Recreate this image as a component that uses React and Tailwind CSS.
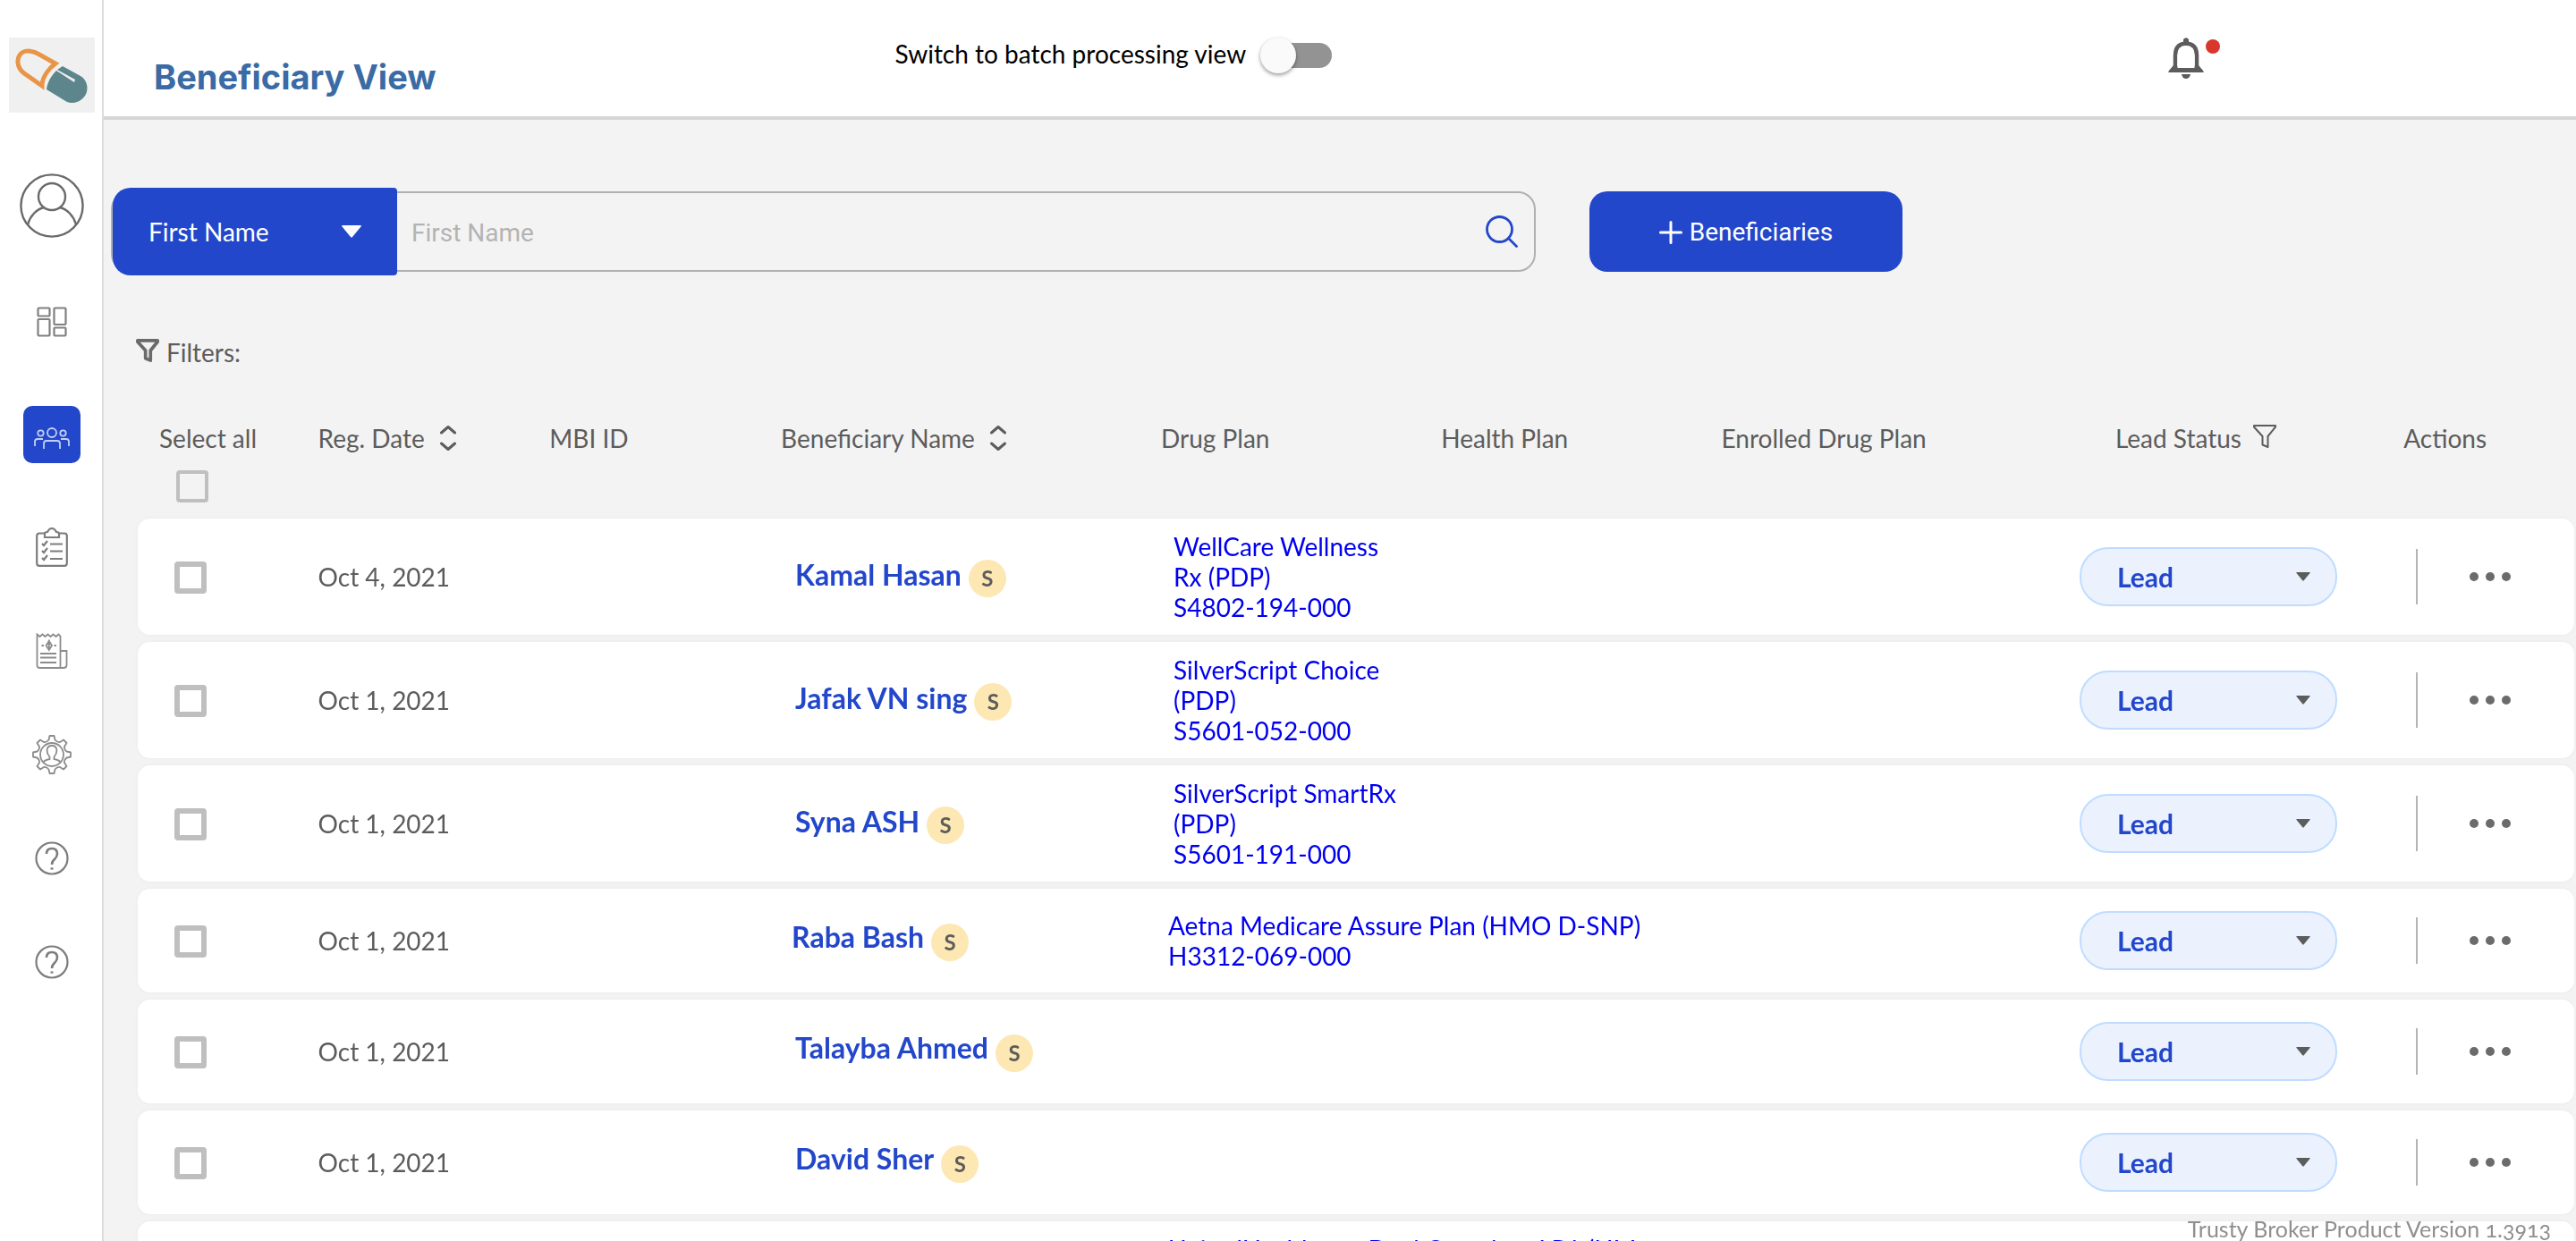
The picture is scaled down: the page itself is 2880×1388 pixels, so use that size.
import React from "react";

const rows = [
  { date: "Oct 4, 2021", name: "Kamal Hasan", plan: "WellCare Wellness Rx (PDP)", code: "S4802-194-000", tall: true },
  { date: "Oct 1, 2021", name: "Jafak VN sing", plan: "SilverScript Choice (PDP)", code: "S5601-052-000", tall: true },
  { date: "Oct 1, 2021", name: "Syna ASH", plan: "SilverScript SmartRx (PDP)", code: "S5601-191-000", tall: true },
  { date: "Oct 1, 2021", name: "Raba Bash", plan: "Aetna Medicare Assure Plan (HMO D-SNP)", code: "H3312-069-000", wide: true },
  { date: "Oct 1, 2021", name: "Talayba Ahmed" },
  { date: "Oct 1, 2021", name: "David Sher" },
  { date: "Oct 1, 2021", name: "Maria Cole", plan: "UnitedHealthcare Dual Complete LP1 (HM\nD-SNP)", code: "H5322-025-000", wide: true, tall: true },
];

function Logo() {
  return (
    <svg viewBox="0 0 96 84" className="h-[84px] w-24 bg-[#f0f0f0]" aria-label="Home">
      <path d="M37 54 L17 40 C4 30 10 12 25 15.500 C29 16 31 17 33 18.500 L52 29 C44 35 38 44 37 52 Z" fill="none" stroke="#e99547" strokeWidth="5" />
      <path d="M53 37 C47 43 43 50 42 58 L64 71.500 C74 76 84 70 87 61 C89 52 85 46 80 43 L60 32 L54 36 L74 47 L73 50 Z" fill="#5c868c" />
    </svg>
  );
}

function Avatar() {
  return (
    <svg viewBox="0 0 72 72" className="size-[72px]" fill="none" stroke="#6a6a6a" strokeWidth="2.400">
      <circle cx="36" cy="36" r="34.600" />
      <circle cx="36" cy="26" r="15" />
      <path d="M9 57 C12 47 19 40 27 38 M45 38 C53 40 60 47 63 57" />
    </svg>
  );
}

function DashboardIcon() {
  return (
    <svg viewBox="0 0 34 34" className="size-[34px]" fill="none" stroke="#808080" strokeWidth="2.200">
      <rect x="1.500" y="1.500" width="13" height="9" rx="1" />
      <rect x="1.500" y="14" width="13" height="18.500" rx="1" />
      <rect x="19.500" y="1.500" width="13" height="18.500" rx="1" />
      <rect x="19.500" y="23.500" width="13" height="9" rx="1" />
    </svg>
  );
}

function PeopleIcon() {
  return (
    <svg viewBox="0 0 40 26" className="h-[26px] w-10" fill="none" stroke="#c3cff5" strokeWidth="1.800">
      <circle cx="20" cy="7" r="5" />
      <circle cx="7.500" cy="7.500" r="3.200" />
      <circle cx="32.500" cy="7.500" r="3.200" />
      <path d="M11 25 V19 Q11 16 14 16 H26 Q29 16 29 19 V25" />
      <path d="M1 22 V17 Q1 14 4 14 H10 M30 14 H36 Q39 14 39 17 V22" />
    </svg>
  );
}

function ClipboardIcon() {
  return (
    <svg viewBox="0 0 36 44" className="h-11 w-9" fill="none" stroke="#7d7d7d" strokeWidth="2.200">
      <path d="M10 6.500 H4 Q1.200 6.500 1.200 9.500 V40 Q1.200 42.800 4 42.800 H32 Q34.800 42.800 34.800 40 V9.500 Q34.800 6.500 32 6.500 H26" />
      <path d="M10 11 V7 Q10 5 13 5 Q15 1 18 1 Q21 1 23 5 Q26 5 26 7 V11 Z" />
      <path d="M7 18 l2 2 l4-5 M7 26 l2 2 l4-5 M7 34 l2 2 l4-5 M16 18.500 H30 M16 26.500 H30 M16 35 H30" />
    </svg>
  );
}

function ReceiptIcon() {
  return (
    <svg viewBox="0 0 36 40" className="h-10 w-9" fill="none" stroke="#8c8c8c" strokeWidth="1.800">
      <path d="M1.500 1.500 l3 2.500 l3-2.500 l3 2.500 l3-2.500 l3 2.500 l3-2.500 l3 2.500 l3-2.500 l2 2 V39 H4 Q1.500 39 1.500 36 Z" />
      <path d="M28 20 H34.500 V36 Q34.500 39 31 39 H27" />
      <path d="M14.800 9 L18 14 L14.800 19 L11.600 14 Z M14.800 7.500 V20 M6.500 14 H9 M20.500 14 H23" />
      <path d="M5 23 H23 M5 27.500 H23 M5 33 H23" />
    </svg>
  );
}

function GearUserIcon() {
  return (
    <svg viewBox="0 0 44 44" className="size-11" fill="none" stroke="#8c8c8c" strokeWidth="1.800">
      <path d="M18.500 5.500 L19.500 1 H24.500 L25.500 5.500 Q28 8.500 31 8 L35 5.500 L38.500 9 L36 13 Q35.500 16 38.500 18.500 L43 19.500 V24.500 L38.500 25.500 Q35.500 28 36 31 L38.500 35 L35 38.500 L31 36 Q28 35.500 25.500 38.500 L24.500 43 H19.500 L18.500 38.500 Q16 35.500 13 36 L9 38.500 L5.500 35 L8 31 Q8.500 28 5.500 25.500 L1 24.500 V19.500 L5.500 18.500 Q8.500 16 8 13 L5.500 9 L9 5.500 L13 8 Q16 8.500 18.500 5.500 Z" strokeLinejoin="round" />
      <circle cx="22" cy="22" r="13" />
      <path d="M12.500 30.500 Q14 28 19.500 27 V24.500 Q16.500 21 16.500 17 Q17 12 22 12 Q27 12 27.500 17 Q27.500 21 24.500 24.500 V27 Q30 28 31.500 30.500" />
    </svg>
  );
}

function HelpIcon() {
  return (
    <svg viewBox="0 0 38 38" className="size-[38px]" fill="none" stroke="#7d7d7d" strokeWidth="2.200">
      <circle cx="19" cy="19" r="17.500" />
      <path d="M13 14 Q13 8 19 8 Q25 8 25 14 Q25 17 22 20 Q19 22.500 19 26" strokeWidth="2.600" />
      <path d="M17.500 30.500 H20.500" />
    </svg>
  );
}

function FunnelIcon({ className, bold }) {
  return (
    <svg viewBox="0 0 28 28" className={className} fill="none" stroke={bold ? "#6a6a6a" : "#5c5c5c"} strokeWidth={bold ? 4 : 2} strokeLinejoin="round">
      <path d="M2 2 H26 V3.500 L17.500 14 V26 L11.500 23.500 V14 L2 3.500 Z" />
    </svg>
  );
}

function SortIcon() {
  return (
    <svg viewBox="0 0 20 30" className="h-[30px] w-5" fill="none" stroke="#5c5c5c" strokeWidth="3" strokeLinecap="round" strokeLinejoin="round">
      <path d="M2.500 9 L10 2.500 L17.500 9 M2.500 21 L10 27.500 L17.500 21" />
    </svg>
  );
}

function Caret({ className }) {
  return (
    <svg viewBox="0 0 22 14" className={className} fill="currentColor" aria-hidden="true">
      <path d="M1 0 H21 Q22.500 0 21.500 1.500 L12 13 Q11 14 10 13 L0.500 1.500 Q-0.500 0 1 0 Z" />
    </svg>
  );
}

function SideLink({ label, active, children }) {
  return (
    <a
      href="#"
      aria-label={label}
      className={active ? "flex size-16 items-center justify-center rounded-[10px] bg-[#2347cb] pt-2" : "flex size-16 items-center justify-center"}
    >
      {children}
    </a>
  );
}

function Sidebar() {
  return (
    <aside className="flex w-[116px] shrink-0 flex-col items-center border-r-2 border-[#dddddd] bg-white pt-[42px] pl-0.5">
      <a href="#"><Logo /></a>
      <a href="#" aria-label="Profile" className="mt-[68px]"><Avatar /></a>
      <nav className="mt-[62px] flex flex-col gap-[62px]">
        <SideLink label="Dashboard"><DashboardIcon /></SideLink>
        <SideLink label="Beneficiaries" active><PeopleIcon /></SideLink>
        <div className="flex flex-col gap-[52px]">
          <SideLink label="Tasks"><ClipboardIcon /></SideLink>
          <SideLink label="Invoices"><ReceiptIcon /></SideLink>
          <SideLink label="Settings"><GearUserIcon /></SideLink>
          <SideLink label="Help"><HelpIcon /></SideLink>
          <SideLink label="Support"><HelpIcon /></SideLink>
        </div>
      </nav>
    </aside>
  );
}

function Header() {
  return (
    <header className="grid h-[134px] grid-cols-[32%_51.500%_1fr] items-start border-b-4 border-[#d6d6d6] bg-white">
      <h1 className="pt-[60px] pl-14 font-['Inter',sans-serif] text-[38px] leading-[52px] font-bold text-[#3a6ba5]">Beneficiary View</h1>
      <label className="mt-[42px] flex h-10 items-center text-black">
        <span className="pb-1 leading-9">Switch to batch processing view</span>
        <input type="checkbox" role="switch" className="peer sr-only" />
        <span className="ml-7 flex h-7 w-[68px] items-center rounded-full bg-[#939393]">
          <span className="-ml-3 size-10 shrink-0 rounded-full bg-[#fafafa] shadow-[0_2px_4px_rgba(0,0,0,0.4)]" />
        </span>
      </label>
      <button type="button" aria-label="Notifications" className="mt-[42px] flex items-start gap-0.5 justify-self-start">
        <svg viewBox="0 0 40 46" className="h-[46px] w-10">
          <path d="M20 6.500 Q32 7 32 20 V32 L35.500 36.500 H4.500 L8 32 V20 Q8 7 20 6.500 Z" fill="none" stroke="#5c5c5c" strokeWidth="4.500" />
          <path d="M17 6 V2 Q20 -1.500 23 2 V6 Z M1 39 V37 L6 32 H34 L39 37 V39 Z M15 41 H25 Q24 46 20 46 Q16 46 15 41 Z" fill="#5c5c5c" />
          <path d="M10.500 20 Q10.500 9.500 20 9.500 Q29.500 9.500 29.500 20 V34 H10.500 Z" fill="#fff" />
        </svg>
        <span className="mt-0.5 size-4 rounded-full bg-[#d9372c]" />
      </button>
    </header>
  );
}

function SearchBar() {
  return (
    <div className="flex items-center gap-[60px] pl-2">
      <div className="flex h-[90px] w-[57.800%] items-center rounded-[20px] border-2 border-[#b0b0b0]">
        <button type="button" className="flex h-[98px] w-[318px] shrink-0 items-center justify-between rounded-l-[20px] rounded-r-sm bg-[#2347cb] px-10 text-white">
          First Name
          <Caret className="h-3.5 w-[22px]" />
        </button>
        <input type="text" aria-label="First Name" placeholder="First Name" className="h-full min-w-0 flex-1 bg-transparent px-4 pt-0.5 font-['Roboto',sans-serif] outline-none placeholder:text-[#b3b3b3]" />
        <button type="button" aria-label="Search" className="mr-[18px]">
          <svg viewBox="0 0 36 36" className="size-9" fill="none" stroke="#2347cb" strokeWidth="2.800" strokeLinecap="round">
            <circle cx="15.500" cy="15.500" r="14" />
            <path d="M25.500 25.500 L34.500 34.500" />
          </svg>
        </button>
      </div>
      <button type="button" className="flex h-[90px] w-[350px] items-center justify-center gap-2 rounded-[20px] bg-[#2347cb] pt-0.5 font-['Roboto',sans-serif] text-[28px] text-white">
        <svg viewBox="0 0 26 26" className="size-[26px]" stroke="#fff" strokeWidth="3" strokeLinecap="round">
          <path d="M13 1.500 V24.500 M1.500 13 H24.500" />
        </svg>
        Beneficiaries
      </button>
    </div>
  );
}

function Row({ row }) {
  const height = row.tall ? "h-[130px]" : "h-[116px]";
  return (
    <tr className="drop-shadow-[0_0_2px_rgba(0,0,0,0.04)]">
      <td className={`${height} rounded-l-[14px] bg-white p-0 pl-[41px]`}>
        <input type="checkbox" aria-label={`Select ${row.name}`} className="mt-0.5 block size-9 appearance-none rounded-sm border-[6px] border-[#bfbfbf]" />
      </td>
      <td className="bg-white p-0">{row.date}</td>
      <td className="bg-white p-0" />
      <td className={row.wide ? "bg-white p-0 pl-3" : "bg-white p-0 pl-4"}>
        <div className="flex items-center gap-2">
          <a href="#" className={row.tall ? "pb-1 text-[32px] leading-10 font-bold text-[#2347cb]" : "pb-2 text-[32px] leading-10 font-bold text-[#2347cb]"}>{row.name}</a>
          <span className="mt-1 flex size-[42px] items-center justify-center rounded-full bg-[#fde7b3] text-2xl font-bold">S</span>
        </div>
      </td>
      <td className={row.wide ? "bg-white p-0 pl-2 whitespace-pre" : "bg-white p-0 pr-9 pl-3.5"}>
        {row.plan && (
          <a href="#" className="block leading-[34px] text-[#0000ee]">
            {row.plan}
            <br />
            {row.code}
          </a>
        )}
      </td>
      <td className="bg-white p-0" />
      <td className="bg-white p-0" />
      <td className="bg-white p-0">
        <div className="relative w-72 text-[#2347cb]">
          <select aria-label={`Lead status for ${row.name}`} defaultValue="Lead" className="block h-[66px] w-full appearance-none rounded-[32px] border-2 border-[#bfdcff] bg-[#ebf2fe] pl-10 text-[30px] font-bold">
            <option>Lead</option>
          </select>
          <Caret className="pointer-events-none absolute top-7 right-[30px] h-2.5 w-4 text-[#5c5c5c]" />
        </div>
      </td>
      <td className="rounded-r-[14px] bg-white p-0">
        <div className="flex items-center pl-3.5">
          <span className={row.tall ? "h-[62px] w-0.5 bg-[#b3b3b3]" : "h-[52px] w-0.5 bg-[#b3b3b3]"} />
          <button type="button" aria-label={`Actions for ${row.name}`} className="ml-[58px] flex gap-2">
            <span className="size-2.5 rounded-full bg-[#6b6b6b]" />
            <span className="size-2.5 rounded-full bg-[#6b6b6b]" />
            <span className="size-2.5 rounded-full bg-[#6b6b6b]" />
          </button>
        </div>
      </td>
    </tr>
  );
}

function BeneficiaryTable() {
  return (
    <table className="w-full table-fixed border-separate border-spacing-x-0 border-spacing-y-2 text-left">
      <colgroup>
        <col className="w-[7.400%]" />
        <col className="w-[9.500%]" />
        <col className="w-[9.500%]" />
        <col className="w-[15.600%]" />
        <col className="w-[11.500%]" />
        <col className="w-[11.500%]" />
        <col className="w-[14.700%]" />
        <col className="w-[13.300%]" />
        <col className="w-[7%]" />
      </colgroup>
      <thead className="align-top leading-9 whitespace-nowrap">
        <tr className="h-[100px]">
          <th className="p-0 pl-6 font-normal">
            <label className="flex flex-col">
              Select all
              <input type="checkbox" className="mt-[18px] ml-[19px] block size-9 appearance-none rounded-sm border-4 border-[#bfbfbf]" />
            </label>
          </th>
          <th className="p-0 font-normal">
            <button type="button" className="flex items-center gap-4">Reg. Date <SortIcon /></button>
          </th>
          <th className="p-0 font-normal">MBI ID</th>
          <th className="p-0 font-normal">
            <button type="button" className="flex items-center gap-4">Beneficiary Name <SortIcon /></button>
          </th>
          <th className="p-0 font-normal">Drug Plan</th>
          <th className="p-0 font-normal">Health Plan</th>
          <th className="p-0 font-normal">Enrolled Drug Plan</th>
          <th className="p-0 pl-10 font-normal">
            <button type="button" className="flex items-center gap-3">Lead Status <FunnelIcon className="mb-1 size-7" /></button>
          </th>
          <th className="p-0 font-normal">Actions</th>
        </tr>
      </thead>
      <tbody>
        {rows.map((row, index) => <Row key={index} row={row} />)}
      </tbody>
    </table>
  );
}

export default function App() {
  return (
    <div className="flex h-screen overflow-hidden bg-[#f3f3f3] font-['Lato',sans-serif] text-[28px] text-[#5c5c5c]">
      <Sidebar />
      <div className="min-w-0 flex-1">
        <Header />
        <main className="pt-20">
          <SearchBar />
          <div className="mt-[72px] flex items-center gap-2 pl-9 leading-9">
            <FunnelIcon bold className="mb-1 size-[26px]" />
            Filters:
          </div>
          <div className="mt-[52px] pr-0.5 pl-[38px]">
            <BeneficiaryTable />
          </div>
        </main>
      </div>
      <footer className="fixed right-7 bottom-0 text-[25px] leading-7 text-[#8f8f8f] oldstyle-nums">Trusty Broker Product Version 1.3913</footer>
    </div>
  );
}
